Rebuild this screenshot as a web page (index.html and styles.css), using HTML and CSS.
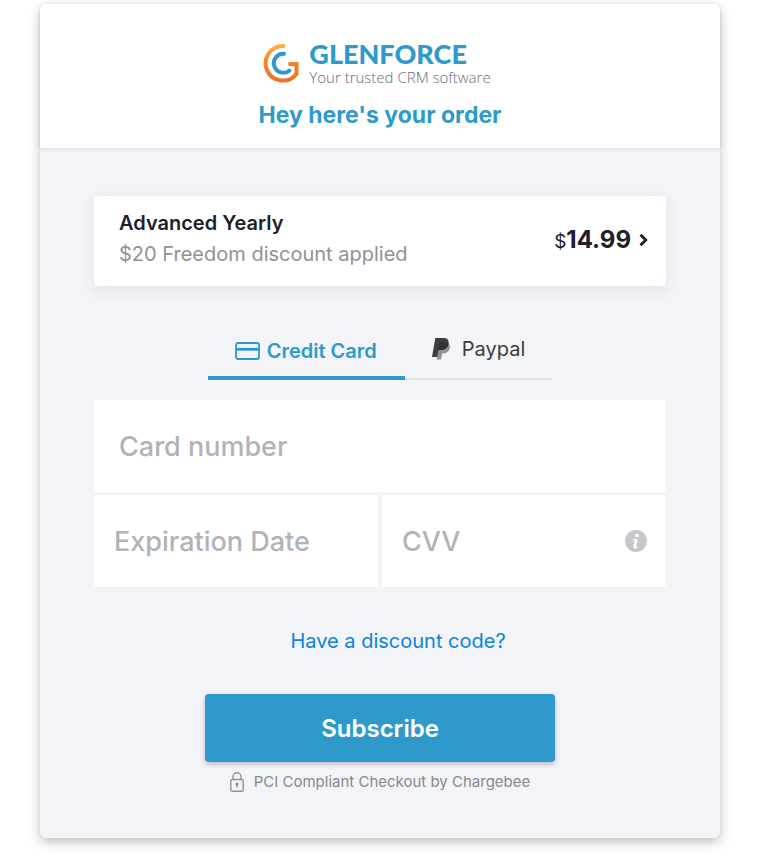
FILE: index.html
```html
<!DOCTYPE html>
<html lang="en">

<head>
    <meta charset="UTF-8">
    <meta name="viewport" content="width=device-width, initial-scale=1.0">
    <title>Glenforce - Checkout</title>
    <link rel="stylesheet" href="styles.css">
</head>

<body>
    <main class="checkout">
        <header class="checkout-header">
            <div class="logo">
                <svg class="logo-mark" viewBox="0 0 36 40" fill="none" aria-hidden="true">
                    <defs>
                        <linearGradient id="orange" x1="0" y1="0" x2="0" y2="1">
                            <stop offset="0" stop-color="#fbb040" />
                            <stop offset="0.5" stop-color="#f58220" />
                            <stop offset="1" stop-color="#f36f21" />
                        </linearGradient>
                    </defs>
                    <path d="M20.500 3A17.300 17.300 0 1 0 33.500 31V21H27" stroke="url(#orange)" stroke-width="4" stroke-linecap="round" stroke-linejoin="miter" />
                    <path d="M21 10.800A9.500 9.500 0 1 0 26.500 27.500" stroke="#2e9acb" stroke-width="4" stroke-linecap="round" />
                </svg>
                <div class="logo-text">
                    <span class="logo-name">GLENFORCE</span>
                    <span class="logo-tagline">Your trusted CRM software</span>
                </div>
            </div>
            <h1>Hey here's your order</h1>
        </header>

        <form class="checkout-body">
            <button type="button" class="plan">
                <span class="plan-info">
                    <span class="plan-name">Advanced Yearly</span>
                    <span class="plan-discount">$20 Freedom discount applied</span>
                </span>
                <span class="plan-price"><span class="currency">$</span>14.99</span>
                <svg class="chevron" viewBox="0 0 9 14" fill="none" aria-hidden="true">
                    <path d="M1.500 1.800L6.800 7L1.500 12.200" stroke="#202028" stroke-width="2.800" />
                </svg>
            </button>

            <div class="tabs" role="tablist">
                <button type="button" class="tab active" role="tab" aria-selected="true">
                    <svg class="card-icon" viewBox="0 0 25 18" fill="none" aria-hidden="true">
                        <rect x="1" y="1" width="23" height="16" rx="2" stroke="currentColor" stroke-width="1.8" />
                        <path d="M1 7.3H24" stroke="currentColor" stroke-width="2.8" />
                    </svg>
                    Credit Card
                </button>
                <button type="button" class="tab" role="tab" aria-selected="false">
                    <svg class="paypal-icon" viewBox="0 0 18 22" aria-hidden="true">
                        <path d="M6 5H16C18 6.5 18.300 9 17.400 11.300C16.400 14 14 15.500 11 15.500H10L9 21.500H4.700L5 19Z" fill="#8f9092" />
                        <path d="M3.300 0H11.500C15.500 0 17.200 2.200 16.500 5.800C15.700 10 13 12 9 12H6.500L5.200 19H0Z" fill="#3c3e40" />
                        <path d="M7 5.300C7.200 4.700 7.600 4.500 8.200 4.500H14C15 4.500 15.900 4.700 16.500 5.200C15.900 9.800 13 12 9 12H6Z" fill="#303234" />
                    </svg>
                    Paypal
                </button>
            </div>

            <div class="fields">
                <input class="card-number" type="text" placeholder="Card number" aria-label="Card number">
                <input class="expiry" type="text" placeholder="Expiration Date" aria-label="Expiration Date">
                <div class="cvv">
                    <input type="text" placeholder="CVV" aria-label="CVV">
                    <svg class="info-icon" viewBox="0 0 22 22" aria-hidden="true">
                        <circle cx="11" cy="11" r="11" fill="#c6c7cc" />
                        <circle cx="12" cy="5.300" r="1.900" fill="#fff" />
                        <path d="M7.800 9.300H12.700L11.100 16.200Q10.900 17.200 12.900 16.700V17.700Q11 18.700 9.500 18.400Q7.900 18 8.400 16L9.700 10.500L7.800 10.300Z" fill="#fff" />
                    </svg>
                </div>
            </div>

            <a class="discount-link" href="#">Have a discount code?</a>

            <button type="submit" class="subscribe">Subscribe</button>

            <p class="secure">
                <svg class="lock-icon" viewBox="0 0 14 20" fill="none" aria-hidden="true">
                    <rect x=".8" y="7.500" width="12.400" height="11.700" rx="1.500" stroke="#929297" stroke-width="1.400" />
                    <path d="M3 7.500V4.700A4 4 0 0 1 11 4.700V7.500" stroke="#929297" stroke-width="1.400" />
                    <circle cx="7" cy="12" r="1.500" fill="#88888d" />
                    <path d="M7 12V15.500" stroke="#88888d" stroke-width="1.300" />
                </svg>
                PCI Compliant Checkout by Chargebee
            </p>
        </form>
    </main>
</body>

</html>
```
FILE: styles.css
```css
* {
    margin: 0;
    padding: 0;
    box-sizing: border-box;
}

body {
    padding: 4px 41px 18px 40px;
    background: #fff;
    font-family: Inter, "Liberation Sans", sans-serif;
    color: #202028;
}

button,
input {
    border: none;
    font-family: inherit;
    color: inherit;
}

button {
    cursor: pointer;
}

.checkout {
    max-width: 680px;
    margin: 0 auto;
    border-radius: 6px;
    background: #f3f4f8;
    box-shadow: 0 4px 12px rgba(0, 0, 0, 0.25);
}

/* header */
.checkout-header {
    display: flex;
    flex-direction: column;
    align-items: center;
    padding: 36px 20px 17px;
    border-radius: 6px 6px 0 0;
    background: #fff;
    box-shadow: 0 1px 4px rgba(0, 0, 0, 0.1);
}

.logo {
    display: flex;
    align-items: center;
    gap: 10px;
    margin-right: 6px;
}

.logo-mark {
    width: 36px;
    height: 40px;
}

.logo-text {
    display: flex;
    flex-direction: column;
}

.logo-name {
    font-family: Lato, sans-serif;
    font-size: 27px;
    font-weight: 900;
    line-height: 28px;
    color: #2e9acb;
}

.logo-tagline {
    font-family: "Open Sans", sans-serif;
    font-size: 15px;
    font-weight: 300;
    line-height: 18px;
    color: #5f6d7a;
}

h1 {
    margin-top: 13px;
    font-size: 23px;
    font-weight: 700;
    line-height: 32px;
    color: #2e9acb;
}

/* body */
.checkout-body {
    display: flex;
    flex-direction: column;
    align-items: center;
    padding: 48px 54px 44px;
}

.plan {
    display: flex;
    align-items: center;
    width: 100%;
    padding: 12px 18px 16px 25px;
    border-radius: 4px;
    background: #fff;
    box-shadow: 0 4px 16px rgba(40, 40, 60, 0.08);
    text-align: left;
}

.plan-info {
    display: flex;
    flex: 1;
    flex-direction: column;
}

.plan-name,
.plan-discount {
    font-size: 20px;
    line-height: 31px;
}

.plan-name {
    font-weight: 600;
}

.plan-discount {
    color: #929292;
}

.plan-price {
    padding-top: 4px;
    font-size: 24px;
    font-weight: 700;
    line-height: 30px;
}

.currency {
    font-size: 19px;
    font-weight: 400;
}

.chevron {
    width: 9px;
    height: 14px;
    margin-top: 2px;
    margin-left: 8px;
}

/* payment method tabs */
.tabs {
    display: flex;
    margin-top: 44px;
}

.tab {
    display: flex;
    align-items: center;
    gap: 12px;
    height: 50px;
    padding: 0 27px 10px;
    border-bottom: 2px solid #e1e2e6;
    background: none;
    font-size: 20px;
    color: #3c3c40;
}

.tab.active {
    gap: 7px;
    padding: 0 28px 5px 27px;
    border-bottom: 4px solid #2e9acb;
    font-weight: 600;
    color: #2e9acb;
}

.card-icon {
    width: 25px;
    height: 18px;
}

.paypal-icon {
    width: 18px;
    height: 22px;
}

/* card fields */
.fields {
    display: grid;
    grid-template-columns: 1fr 1fr;
    gap: 3px 4px;
    width: 100%;
    margin-top: 20px;
    border-radius: 4px;
    overflow: hidden;
}

.fields input {
    width: 100%;
    height: 92px;
    padding: 0 20px;
    background: #fff;
    font-size: 27px;
    font-weight: 500;
}

.fields input::placeholder {
    color: #b0b3b9;
    opacity: 1;
}

.fields .card-number {
    grid-column: 1 / 3;
    padding: 0 25px;
}

.cvv {
    display: flex;
    align-items: center;
    padding-right: 19px;
    background: #fff;
}

.info-icon {
    flex: none;
    width: 22px;
    height: 22px;
}

.discount-link {
    margin-top: 40px;
    padding-left: 36px;
    font-size: 20px;
    line-height: 28px;
    color: #0a84e0;
    text-decoration: none;
}

.subscribe {
    width: 100%;
    max-width: 350px;
    height: 68px;
    margin-top: 39px;
    border-radius: 4px;
    background: #2e9acb;
    box-shadow: 0 2px 5px rgba(0, 0, 0, 0.25);
    font-size: 24px;
    font-weight: 600;
    color: #fff;
}

.secure {
    display: flex;
    align-items: center;
    gap: 10px;
    margin-top: 8px;
    font-size: 15px;
    line-height: 24px;
    color: #88888d;
}

.lock-icon {
    width: 14px;
    height: 20px;
}
```
